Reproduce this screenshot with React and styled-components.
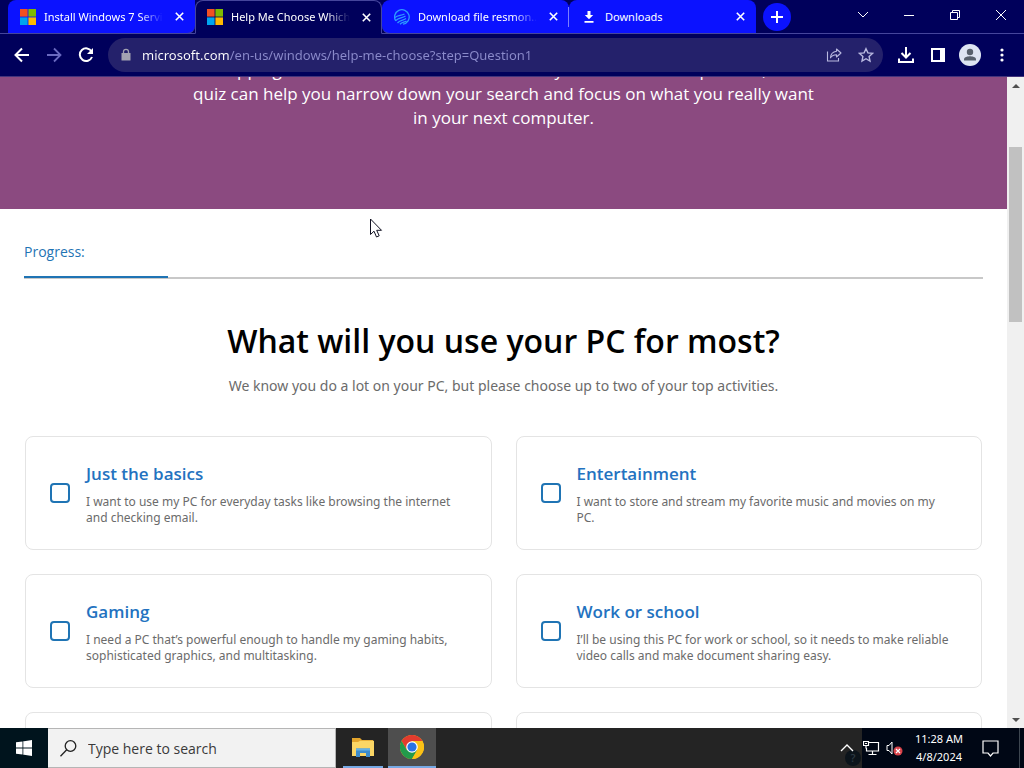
import React, { useState } from 'react';
import styled, { createGlobalStyle, css } from 'styled-components';

const navy = '#00005b';
const tabBlue = '#0b12ff';
const seam = '#45459c';
const accent = '#1f74b4';
const wideSans = '"Noto Sans", "Open Sans", sans-serif';

const GlobalStyle = createGlobalStyle`
  *, *::before, *::after { box-sizing: border-box; }
  body {
    margin: 0;
    font-family: "Open Sans", "Noto Sans", sans-serif;
    overflow: hidden;
  }
  button, input { font: inherit; color: inherit; }
  button { padding: 0; border: 0; background: none; cursor: default; }
  svg { display: block; flex: none; }
`;

const Desktop = styled.div`
  display: flex;
  flex-direction: column;
  height: 100vh;
`;

/* ---------- browser frame ---------- */

const TabStrip = styled.header`
  display: flex;
  flex: none;
  height: 34px;
  padding-left: 8px;
  background: ${navy};
  color: #fff;
`;

const TabList = styled.div`
  display: flex;
  flex: 1;
  min-width: 0;
  box-shadow: inset 0 -1px ${seam};
`;

const LeadSeam = styled.div`
  flex: none;
  width: 8px;
  margin-left: -8px;
  box-shadow: inset 0 -1px ${seam};
`;

const Tab = styled.div`
  display: flex;
  align-items: center;
  flex: 0 1 187px;
  min-width: 0;
  gap: 8px;
  padding: 0 8px 0 12px;
  font-family: ${wideSans};
  font-size: 11px;
  border-bottom: 1px solid ${seam};
  background: ${tabBlue};
  border-radius: ${(p) => p.$radius || '0'};
  ${(p) =>
    p.$active &&
    css`
      background: ${navy};
      border: 1px solid ${seam};
      border-bottom-color: ${navy};
      border-radius: 8px 8px 0 0;
      padding: 0 7px 0 11px;
    `}
`;

const TabIcon = styled.span`
  display: grid;
  place-items: center;
  flex: none;
  width: 16px;
  height: 16px;
`;

const TabTitle = styled.span`
  flex: 1;
  min-width: 0;
  overflow: hidden;
  white-space: nowrap;
  line-height: 20px;
  ${(p) => p.$fade && css`mask-image: linear-gradient(90deg, #000 80%, transparent);`}
`;

const TabClose = styled.button`
  display: grid;
  place-items: center;
  flex: none;
  width: 16px;
  height: 16px;
`;

const TabDivider = styled.span`
  flex: none;
  align-self: center;
  width: 1px;
  height: 20px;
  margin-left: -1px;
  background: #7b7fff;
`;

const NewTab = styled.button`
  display: grid;
  place-items: center;
  flex: none;
  align-self: center;
  width: 28px;
  height: 28px;
  margin-left: 7px;
  border-radius: 50%;
  background: ${tabBlue};
`;

const CaptionButtons = styled.div`
  display: flex;
  flex: none;
  box-shadow: inset 0 -1px ${seam};
`;

const CaptionButton = styled.button`
  display: grid;
  place-items: center;
  width: 46px;
  height: 29px;
`;

const Toolbar = styled.nav`
  display: flex;
  align-items: center;
  flex: none;
  height: 43px;
  padding: 0 6px;
  background: ${navy};
  border-bottom: 1px solid #43347c;
  color: #fff;
`;

const toolTones = { bright: '#fff', soft: '#b9b9e0', dim: '#6a6ac0' };

const ToolButton = styled.button`
  display: grid;
  place-items: center;
  flex: none;
  width: 32px;
  height: 32px;
  color: ${(p) => toolTones[p.$tone || 'bright']};
`;

const Omnibox = styled.div`
  display: flex;
  align-items: center;
  flex: 1;
  min-width: 0;
  height: 34px;
  margin: 0 7px 0 6px;
  padding: 0 1px 0 12px;
  border-radius: 17px;
  background: #24216b;
`;

const Address = styled.input`
  flex: 1;
  min-width: 0;
  margin-left: 10px;
  padding: 0;
  border: 0;
  outline: 0;
  font-family: ${wideSans};
  font-size: 13px;
  line-height: 20px;
  color: transparent;
  caret-color: #fff;
  background: linear-gradient(90deg, #fff 88px, #8b8bcb 88px);
  background-clip: text;
`;

/* ---------- web page ---------- */

const Viewport = styled.div`
  position: relative;
  display: flex;
  flex: 1;
  min-height: 0;
  background: #fff;
`;

const Page = styled.main`
  flex: 1;
  min-width: 0;
  overflow: hidden;
`;

const Hero = styled.section`
  display: flex;
  align-items: flex-end;
  justify-content: center;
  height: 132px;
  padding-bottom: 79px;
  overflow: hidden;
  background: #8b4a80;
`;

const HeroText = styled.p`
  margin: 0;
  max-width: 632px;
  font-size: 17px;
  line-height: 24px;
  text-align: center;
  color: #fff;
`;

const Quiz = styled.section`
  padding: 31px 24px 0;
`;

const ProgressLabel = styled.div`
  margin-bottom: 12px;
  font-size: 14px;
  line-height: 24px;
  color: ${accent};
`;

const ProgressBar = styled.div`
  height: 3px;
  background: linear-gradient(#fff 1px, #c8c8c8 1px);
`;

const ProgressFill = styled.div`
  width: 15%;
  height: 2px;
  background: ${accent};
`;

const Question = styled.h1`
  margin: 38px 0 0;
  font-size: 32px;
  font-weight: 600;
  line-height: 48px;
  text-align: center;
  color: #000;
`;

const Hint = styled.p`
  margin: 9px 0 38px;
  font-family: ${wideSans};
  font-size: 14px;
  line-height: 24px;
  text-align: center;
  color: #6b6b6b;
`;

const CardGrid = styled.div`
  display: grid;
  grid-template-columns: 1fr 1fr;
  grid-auto-rows: 114px;
  gap: 24px;
  padding: 0 1px;
`;

const Card = styled.label`
  display: flex;
  align-items: center;
  gap: 16px;
  padding: 0 30px 0 24px;
  border: 1px solid #e4e4e4;
  border-radius: 8px;
`;

const Check = styled.input`
  appearance: none;
  flex: none;
  width: 20px;
  height: 20px;
  margin: 0;
  border: 2px solid ${accent};
  border-radius: 4px;
  &:checked { background: ${accent}; }
`;

const CardTitle = styled.span`
  display: block;
  margin-bottom: 8px;
  font-size: 17px;
  font-weight: 600;
  line-height: 24px;
  color: #2372c0;
`;

const CardBody = styled.span`
  padding-top: 1px;
`;

const CardText = styled.span`
  display: block;
  font-family: ${wideSans};
  font-size: 12px;
  line-height: 16px;
  color: #6b6b6b;
`;

const Scrollbar = styled.div`
  display: flex;
  flex-direction: column;
  align-items: center;
  flex: none;
  width: 17px;
  background: #f0f0f0;
`;

const ScrollArrow = styled.button`
  display: grid;
  place-items: center;
  flex: none;
  width: 17px;
  height: 17px;
`;

const ScrollTrack = styled.div`
  flex: 1;
  width: 13px;
  padding-top: 53px;
`;

const ScrollThumb = styled.div`
  height: 175px;
  background: #c1c1c1;
`;

const Pointer = styled.svg`
  position: absolute;
  left: 369px;
  top: 141px;
`;

/* ---------- taskbar ---------- */

const Taskbar = styled.footer`
  display: flex;
  flex: none;
  height: 40px;
  background: #242424;
  color: #fff;
`;

const StartButton = styled.button`
  display: grid;
  place-items: center;
  flex: none;
  width: 48px;
  background: #00141d;
`;

const SearchBox = styled.label`
  display: flex;
  align-items: center;
  flex: none;
  gap: 11px;
  width: 288px;
  padding-left: 12px;
  border: 1px solid #b5b5b5;
  border-left: 0;
  background: #f2f2f2;
  color: #222;
`;

const SearchInput = styled.input`
  flex: 1;
  min-width: 0;
  padding: 0;
  border: 0;
  outline: 0;
  background: none;
  font-size: 14px;
  &::placeholder { color: #3a3a3a; opacity: 1; }
`;

const Apps = styled.div`
  display: flex;
  flex: 1;
  gap: 5px;
  padding-left: 7px;
`;

const AppButton = styled.button`
  display: grid;
  place-items: center;
  width: ${(p) => (p.$active ? '48px' : '40px')};
  background: ${(p) => (p.$active ? '#4e4e4e' : 'none')};
  border-bottom: 2px solid #76a9e4;
`;

const Overflow = styled.div`
  position: relative;
  display: flex;
  flex: none;
  width: 28px;
`;

const GhostBadge = styled.span`
  position: absolute;
  right: 1px;
  bottom: 2px;
  width: 16px;
  height: 16px;
  border-radius: 50%;
  background: #0c141b;
  color: #2c3942;
  font-size: 11px;
  font-weight: 600;
  line-height: 16px;
  text-align: center;
`;

const TrayButton = styled.button`
  position: relative;
  z-index: 1;
  display: grid;
  place-items: center;
  flex: none;
  width: ${(p) => p.$width || 26}px;
`;

const Tray = styled.div`
  display: flex;
  flex: none;
  padding-right: 9px;
  margin-right: 4px;
  background: #000715;
  border-right: 1px solid #3d4650;
  box-shadow: 4px 0 #000715;
`;

const Clock = styled.time`
  display: flex;
  flex-direction: column;
  justify-content: center;
  width: 62px;
  padding-bottom: 1px;
  font-family: ${wideSans};
  font-size: 11px;
  line-height: 18px;
  text-align: center;
  white-space: nowrap;
`;

/* ---------- icons ---------- */

const MsLogo = () => (
  <svg width="16" height="16" viewBox="0 0 16 16">
    <path fill="#f25022" d="M0 0h7.6v7.6H0z" />
    <path fill="#7fba00" d="M8.4 0H16v7.6H8.4z" />
    <path fill="#00a4ef" d="M0 8.4h7.6V16H0z" />
    <path fill="#ffb900" d="M8.4 8.4H16V16H8.4z" />
  </svg>
);

const ResmonIcon = () => (
  <svg width="16" height="16" viewBox="0 0 16 16" fill="none" stroke="#2e9bff" strokeWidth="1.3">
    <path d="M1.800 12A7.300 7.300 0 1 1 9 15.200" />
    <path d="M1 8.500C4 6 7 7 10.500 5M1.800 11.500C5 8.500 8 9.500 11.500 7M3.500 14C6 11 8.500 12 12 9.500M6 15.200C8 13 10 13.500 12.500 12" />
  </svg>
);

const SaveIcon = () => (
  <svg width="12" height="12" viewBox="0 0 12 12" fill="#fff">
    <path d="M4.500 0h3v4H10.200L6 8.300 1.800 4H4.500zM1.500 10h9v1.700h-9z" />
  </svg>
);

const CloseIcon = () => (
  <svg width="9" height="9" viewBox="0 0 9 9" stroke="#fff" strokeWidth="1.600">
    <path d="M.8.800l7.400 7.400M8.200.800L.8 8.200" />
  </svg>
);

const icon = { fill: 'none', stroke: 'currentColor' };

const BackIcon = () => (
  <svg width="16" height="16" viewBox="0 0 16 16" {...icon} strokeWidth="2">
    <path d="M15 8H2M8 1.500L1.500 8 8 14.500" />
  </svg>
);
const ForwardIcon = () => (
  <svg width="16" height="16" viewBox="0 0 16 16" {...icon} strokeWidth="1.800">
    <path d="M1 8h13M8 1.500L14.500 8 8 14.500" />
  </svg>
);
const ReloadIcon = () => (
  <svg width="16" height="16" viewBox="0 0 16 16" {...icon} strokeWidth="2">
    <path d="M13.600 4.500A6.300 6.300 0 1 0 14 10" />
    <path d="M15 1v6H9z" fill="currentColor" stroke="none" />
  </svg>
);
const LockIcon = () => (
  <svg width="12" height="14" viewBox="0 0 12 14">
    <path d="M1.500 5h9v7.500h-9z" fill="#a3a3b2" />
    <path d="M3.500 5.500V3.800a2.500 2.500 0 0 1 5 0v1.700" fill="none" stroke="#a3a3b2" strokeWidth="1.300" />
  </svg>
);
const ShareIcon = () => (
  <svg width="16" height="16" viewBox="0 0 16 16" {...icon} strokeWidth="1.100">
    <path d="M1.500 4.500v9.500h11v-3" />
    <path d="M10.500 2l4.500 4-4.500 4V7.700C8 7.700 6 8.500 4.500 10.800 4.700 7.200 7 4.800 10.500 4.300z" strokeLinejoin="round" />
  </svg>
);
const StarIcon = () => (
  <svg width="16" height="16" viewBox="0 0 16 16" {...icon} strokeWidth="1.400">
    <path d="M8 1.700l1.900 4.200 4.600.5-3.400 3.100.9 4.500L8 11.700 4 14l.9-4.500L1.500 6.400l4.600-.5z" />
  </svg>
);
const DownloadIcon = () => (
  <svg width="18" height="18" viewBox="0 0 18 18" {...icon} strokeWidth="2">
    <path d="M9 1v10M4.500 7L9 11.500 13.500 7M2 12.500V16h14v-3.500" />
  </svg>
);
const PanelIcon = () => (
  <svg width="14" height="14" viewBox="0 0 14 14" {...icon} strokeWidth="2">
    <path d="M1 1h12v12H1z" />
    <path d="M9 1h4v12H9z" fill="currentColor" stroke="none" />
  </svg>
);
const AvatarIcon = () => (
  <svg width="22" height="22" viewBox="0 0 22 22">
    <circle cx="11" cy="11" r="11" fill="#dde4f2" />
    <circle cx="11" cy="8" r="3.200" fill="#57606c" />
    <path d="M5 16.500v-1.300C5 13 9 12.300 11 12.300s6 .7 6 2.900v1.300z" fill="#57606c" />
  </svg>
);
const MoreIcon = () => (
  <svg width="4" height="14" viewBox="0 0 4 14" fill="currentColor">
    <circle cx="2" cy="2" r="1.600" />
    <circle cx="2" cy="7" r="1.600" />
    <circle cx="2" cy="12" r="1.600" />
  </svg>
);

const captionPaths = {
  'Search tabs': 'M1 3l5 5 5-5',
  Minimize: 'M1 6.500h10',
  Restore: 'M1.500 3.500h7v7h-7zM3.500 3.500v-2h7v7h-2',
  'Close window': 'M1 1l10 10M11 1L1 11',
};

const StartIcon = () => (
  <svg width="16" height="16" viewBox="0 0 16 16" fill="#fff">
    <path d="M0 2.300L6.500 1.400v6.200H0zM7.300 1.300L16 0v7.600H7.300zM0 8.400h6.500v6.200L0 13.700zM7.300 8.400H16V16l-8.700-1.300z" />
  </svg>
);
const SearchIcon = () => (
  <svg width="17" height="17" viewBox="0 0 17 17" fill="none" stroke="#222" strokeWidth="1.300">
    <circle cx="10.500" cy="6" r="5.300" />
    <path d="M6.700 9.800L.5 16.300" />
  </svg>
);
const FolderIcon = () => (
  <svg width="22" height="19" viewBox="0 0 22 19">
    <path fill="#e3a52c" d="M0 0h8l2 2h11v5H0z" />
    <path fill="#fbd665" d="M0 4h6l2-1.300h14V18H0z" />
    <path fill="#3d8ccb" d="M4 10.500h14V19h-4v-4H8v4H4z" />
    <path fill="#65b2e7" d="M4 10.500h14v2H4z" />
  </svg>
);
const ChromeIcon = () => (
  <svg width="24" height="24" viewBox="0 0 24 24">
    <circle cx="12" cy="12" r="12" fill="#fbc116" />
    <path fill="#e33b2e" d="M1.600 6A12 12 0 0 1 22.400 6H12L6.800 15z" />
    <path fill="#229a4b" d="M1.600 6A12 12 0 0 0 12 24l5.200-9H6.800z" />
    <path fill="#fbc116" d="M12 24A12 12 0 0 0 22.400 6H12l5.200 9z" />
    <circle cx="12" cy="12" r="5.800" fill="#fff" />
    <circle cx="12" cy="12" r="4.600" fill="#2a73e4" />
  </svg>
);
const ChevronUp = () => (
  <svg width="14" height="8" viewBox="0 0 14 8" fill="none" stroke="#fff" strokeWidth="1.400">
    <path d="M1 7l6-6 6 6" />
  </svg>
);
const NetworkIcon = () => (
  <svg width="17" height="15" viewBox="0 0 17 15" fill="none" stroke="#fff" strokeWidth="1.200">
    <path d="M6 1.500h9.500v8.500h-12V7M9.500 10v4M5.500 13.500h8M.5.500h5v4h-5zM3 4.500v3" />
    <path d="M2 2.500h2" />
  </svg>
);
const VolumeIcon = () => (
  <svg width="17" height="15" viewBox="0 0 17 15">
    <path d="M1 4.500h2l3-3.500v12L3 9.500H1z" fill="none" stroke="#fff" />
    <circle cx="12" cy="10" r="4.500" fill="#d9434a" />
    <path d="M10 8l4 4M14 8l-4 4" stroke="#fff" strokeWidth="1.200" />
  </svg>
);
const NoticeIcon = () => (
  <svg width="17" height="17" viewBox="0 0 17 17" fill="none" stroke="#fff" strokeWidth="1.200">
    <path d="M1 1h15v12h-5l-2.500 3L6 13H1z" />
  </svg>
);

/* ---------- data ---------- */

const tabs = [
  { title: 'Install Windows 7 Servi', Icon: MsLogo, fade: true, radius: '8px 0 8px 0' },
  { title: 'Help Me Choose Which', Icon: MsLogo, fade: true, active: true },
  { title: 'Download file resmon...', Icon: ResmonIcon, fade: true, radius: '8px 8px 0 8px' },
  { title: 'Downloads', Icon: SaveIcon, radius: '8px 8px 0 0', divider: true },
];

const activities = [
  ['Just the basics', 'I want to use my PC for everyday tasks like browsing the internet and checking email.'],
  ['Entertainment', 'I want to store and stream my favorite music and movies on my PC.'],
  ['Gaming', 'I need a PC that\u2019s powerful enough to handle my gaming habits, sophisticated graphics, and multitasking.'],
  ['Work or school', 'I\u2019ll be using this PC for work or school, so it needs to make reliable video calls and make document sharing easy.'],
];

export default function App() {
  const [url, setUrl] = useState('microsoft.com/en-us/windows/help-me-choose?step=Question1');

  return (
    <Desktop>
      <GlobalStyle />
      <TabStrip>
        <LeadSeam />
        <TabList>
          {tabs.map(({ title, Icon, fade, active, radius, divider }) => (
            <React.Fragment key={title}>
              {divider && <TabDivider />}
              <Tab $active={active} $radius={radius}>
                <TabIcon><Icon /></TabIcon>
                <TabTitle $fade={fade}>{title}</TabTitle>
                <TabClose aria-label="Close tab"><CloseIcon /></TabClose>
              </Tab>
            </React.Fragment>
          ))}
          <NewTab aria-label="New tab">
            <svg width="12" height="12" viewBox="0 0 12 12" stroke="#fff" strokeWidth="2">
              <path d="M6 0v12M0 6h12" />
            </svg>
          </NewTab>
        </TabList>
        <CaptionButtons>
          {Object.entries(captionPaths).map(([name, d]) => (
            <CaptionButton key={name} aria-label={name}>
              <svg width="12" height="12" viewBox="0 0 12 12" fill="none" stroke="#fff">
                <path d={d} />
              </svg>
            </CaptionButton>
          ))}
        </CaptionButtons>
      </TabStrip>

      <Toolbar>
        <ToolButton aria-label="Back"><BackIcon /></ToolButton>
        <ToolButton aria-label="Forward" $tone="dim"><ForwardIcon /></ToolButton>
        <ToolButton aria-label="Reload"><ReloadIcon /></ToolButton>
        <Omnibox>
          <LockIcon />
          <Address aria-label="Address" spellCheck={false} value={url} onChange={(e) => setUrl(e.target.value)} />
          <ToolButton aria-label="Share" $tone="soft"><ShareIcon /></ToolButton>
          <ToolButton aria-label="Bookmark" $tone="soft"><StarIcon /></ToolButton>
        </Omnibox>
        <ToolButton aria-label="Downloads"><DownloadIcon /></ToolButton>
        <ToolButton aria-label="Side panel"><PanelIcon /></ToolButton>
        <ToolButton aria-label="Profile"><AvatarIcon /></ToolButton>
        <ToolButton aria-label="Menu"><MoreIcon /></ToolButton>
      </Toolbar>

      <Viewport>
        <Page>
          <Hero>
            <HeroText>
              Shopping for a new machine is easier when you know what to pick out, this
              <br />
              quiz can help you narrow down your search and focus on what you really want
              in your next computer.
            </HeroText>
          </Hero>
          <Quiz>
            <ProgressLabel id="progress-label">Progress:</ProgressLabel>
            <ProgressBar role="progressbar" aria-labelledby="progress-label" aria-valuenow={15}>
              <ProgressFill />
            </ProgressBar>
            <Question>What will you use your PC for most?</Question>
            <Hint>We know you do a lot on your PC, but please choose up to two of your top activities.</Hint>
            <CardGrid>
              {activities.map(([title, text]) => (
                <Card key={title}>
                  <Check type="checkbox" />
                  <CardBody>
                    <CardTitle>{title}</CardTitle>
                    <CardText>{text}</CardText>
                  </CardBody>
                </Card>
              ))}
              <Card as="div" />
              <Card as="div" />
            </CardGrid>
          </Quiz>
        </Page>
        <Scrollbar>
          <ScrollArrow aria-label="Scroll up">
            <svg width="8" height="4" viewBox="0 0 8 4"><path d="M4 0l4 4H0z" fill="#505050" /></svg>
          </ScrollArrow>
          <ScrollTrack><ScrollThumb /></ScrollTrack>
          <ScrollArrow aria-label="Scroll down">
            <svg width="8" height="4" viewBox="0 0 8 4"><path d="M0 0h8L4 4z" fill="#505050" /></svg>
          </ScrollArrow>
        </Scrollbar>
        <Pointer width="14" height="21" viewBox="0 0 14 21">
          <path d="M1.500 1v15.500l3.500-3.300 2.500 5.800 2.700-1.200-2.500-5.500h4.800z" fill="#fff" stroke="#111122" />
        </Pointer>
      </Viewport>

      <Taskbar>
        <StartButton aria-label="Start"><StartIcon /></StartButton>
        <SearchBox>
          <SearchIcon />
          <SearchInput aria-label="Search" placeholder="Type here to search" />
        </SearchBox>
        <Apps>
          <AppButton aria-label="File Explorer"><FolderIcon /></AppButton>
          <AppButton aria-label="Chrome" $active><ChromeIcon /></AppButton>
        </Apps>
        <Overflow>
          <GhostBadge>?</GhostBadge>
          <TrayButton aria-label="Show hidden icons"><ChevronUp /></TrayButton>
        </Overflow>
        <Tray>
          <TrayButton aria-label="Network" $width={18}><NetworkIcon /></TrayButton>
          <TrayButton aria-label="Volume" $width={28}><VolumeIcon /></TrayButton>
          <Clock><span>11:28 AM</span><span>4/8/2024</span></Clock>
          <TrayButton aria-label="Notifications" $width={40}><NoticeIcon /></TrayButton>
        </Tray>
      </Taskbar>
    </Desktop>
  );
}
